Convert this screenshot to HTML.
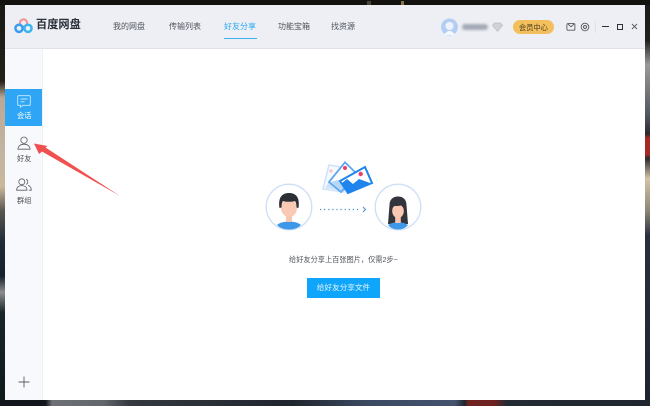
<!DOCTYPE html>
<html><head><meta charset="utf-8">
<style>
html,body{margin:0;padding:0}
body{width:650px;height:406px;position:relative;overflow:hidden;background:#0c0f14;font-family:"Liberation Sans","Noto Sans CJK SC",sans-serif}
.a{position:absolute}
.t{position:absolute;white-space:nowrap;line-height:12px;filter:blur(.25px)}
</style></head>
<body>
<!-- wallpaper strips -->
<div class="a" style="left:0;top:0;width:5px;height:406px;background:linear-gradient(180deg,#1a1814 0,#222019 20%,#b9a994 24%,#c4b5a2 38%,#c9b79c 46%,#59564f 52%,#1e2a38 60%,#16202b 68%,#8a8d8c 72%,#18252a 77%,#0d1a1c 100%)"></div>
<div class="a" style="left:645px;top:0;width:5px;height:406px;background:linear-gradient(180deg,#1a1a1a 0,#20201f 10%,#9a9a98 16%,#55595e 28%,#2a2a30 33%,#a52a26 34%,#a52a26 38%,#2b2a30 39%,#d4c4a6 44%,#8b8578 52%,#2c2f3b 58%,#1c2430 100%)"></div>
<div class="a" style="left:0;top:0;width:650px;height:5px;background:#14120f"></div>
<div class="a" style="left:367px;top:1px;width:4px;height:4px;background:#4a4438"></div>
<div class="a" style="left:401px;top:1px;width:3px;height:4px;background:#84734a"></div>
<div class="a" style="left:0;top:400px;width:650px;height:6px;background:linear-gradient(90deg,#12161c 0,#12161c 7%,#6d7075 8%,#62666b 16%,#34383f 20%,#20252d 45%,#3a4860 56%,#44536e 70%,#1e2530 71.500%,#6e211e 72%,#6e211e 76%,#242a33 78%,#20262e 100%)"></div>

<!-- window -->
<div class="a" style="left:5px;top:5px;width:640px;height:395px;background:#fff"></div>
<div class="a" style="left:5px;top:5px;width:640px;height:43px;background:#edeff5;border-bottom:1px solid #dfe2e8"></div>
<div class="a" style="left:5px;top:49px;width:37px;height:351px;background:#f8f9fc;border-right:1px solid #eef0f4"></div>

<!-- logo -->
<svg class="a" style="left:14px;top:17px" width="19" height="17" viewBox="0 0 19 17">
<circle cx="9.500" cy="6" r="3.600" fill="none" stroke="#f0969a" stroke-width="2.200"/>
<circle cx="5" cy="11.300" r="3.600" fill="none" stroke="#3a9cf0" stroke-width="2.500"/>
<circle cx="14" cy="11.300" r="3.600" fill="none" stroke="#39b6ec" stroke-width="2.500"/>
</svg>
<div class="t" style="left:36px;top:19px;font-size:11.200px;font-weight:700;color:#2a2f3a;line-height:13px">百度网盘</div>

<!-- nav -->
<div class="t" style="left:113px;top:21px;font-size:8px;color:#50535b">我的网盘</div>
<div class="t" style="left:169px;top:21px;font-size:8px;color:#50535b">传输列表</div>
<div class="t" style="left:224px;top:21px;font-size:8px;color:#2eaaf0">好友分享</div>
<div class="a" style="left:224px;top:38px;width:33px;height:1.400px;background:#3db0f0"></div>
<div class="t" style="left:278px;top:21px;font-size:8px;color:#50535b">功能宝箱</div>
<div class="t" style="left:331px;top:21px;font-size:8px;color:#50535b">找资源</div>

<!-- user -->
<svg class="a" style="left:441px;top:18px" width="17" height="18" viewBox="0 0 17 18">
<circle cx="8.500" cy="9" r="8.500" fill="#b4cdf2"/>
<circle cx="8.500" cy="8" r="4" fill="#eef3fb"/>
<path d="M3.500 17c1-3 3-4 5-4s4 1 5 4z" fill="#f4f7fc"/>
</svg>
<div class="a" style="left:462px;top:23.500px;width:26px;height:6px;border-radius:3px;background:#a4aab5;filter:blur(1.300px)"></div>
<svg class="a" style="left:492px;top:22px" width="11" height="10" viewBox="0 0 11 10"><path d="M2.500 1h6l2 2.400L5.500 9.300.5 3.400z" fill="#cfd2d9" stroke="#b9bdc5" stroke-width=".8"/></svg>
<div class="a" style="left:513px;top:20px;width:41px;height:14px;border-radius:7px;background:#f2bf5c"></div>
<div class="t" style="left:519px;top:21.500px;font-size:7.200px;color:#4a3a1c;line-height:11px">会员中心</div>

<!-- top icons -->
<svg class="a" style="left:566px;top:22px" width="10" height="10" viewBox="0 0 10 10"><rect x=".9" y="1.600" width="8" height="6.600" rx="1" fill="none" stroke="#55585f" stroke-width=".9"/><path d="M2 2l3 2.800L8 2" fill="none" stroke="#55585f" stroke-width=".9"/></svg>
<svg class="a" style="left:580px;top:22px" width="10" height="10" viewBox="0 0 10 10"><circle cx="5" cy="5" r="3.800" fill="none" stroke="#55585f" stroke-width=".9"/><circle cx="5" cy="5" r="1.500" fill="none" stroke="#55585f" stroke-width=".9"/></svg>
<div class="a" style="left:595px;top:21px;width:1px;height:12px;background:#dfe1e7"></div>
<div class="a" style="left:602px;top:26px;width:7px;height:1.200px;background:#2d3038"></div>
<div class="a" style="left:617px;top:23.500px;width:4px;height:4px;border:1.300px solid #2d3038"></div>
<svg class="a" style="left:631px;top:22.500px" width="7" height="7" viewBox="0 0 7 7"><path d="M1 1l5 5M6 1L1 6" stroke="#55585f" stroke-width=".9"/></svg>

<!-- sidebar -->
<div class="a" style="left:5px;top:89px;width:37px;height:37px;background:#2ea6f5"></div>
<svg class="a" style="left:17px;top:95px" width="14" height="13" viewBox="0 0 14 13"><path d="M1.500.7h11a.8.8 0 0 1 .8.8v8a.8.8 0 0 1-.8.8H6L3.500 12.200v-1.900h-2a.8.8 0 0 1-.8-.8v-8a.8.8 0 0 1 .8-.8z" fill="none" stroke="#cfe9fd" stroke-width=".9"/><path d="M3.500 4h7M3.500 6.800h4" stroke="#cfe9fd" stroke-width=".9"/></svg>
<div class="t" style="left:17px;top:111px;font-size:7.200px;color:#fff;line-height:10px">会话</div>

<svg class="a" style="left:17px;top:136px" width="14" height="14" viewBox="0 0 14 14"><circle cx="7" cy="4.200" r="3.200" fill="none" stroke="#5a5d65" stroke-width=".8"/><path d="M1 13.200c0-3 2.400-5 6-5s6 2 6 5z" fill="none" stroke="#5a5d65" stroke-width=".8"/></svg>
<div class="t" style="left:17px;top:154px;font-size:7.200px;color:#4a4d55;line-height:10px">好友</div>

<svg class="a" style="left:16px;top:178px" width="16" height="13" viewBox="0 0 16 13"><circle cx="5.800" cy="3.800" r="3" fill="none" stroke="#5a5d65" stroke-width=".8"/><path d="M.6 12.200c0-2.800 2-4.600 5.200-4.600S11 9.400 11 12.200z" fill="none" stroke="#5a5d65" stroke-width=".8"/><path d="M10 1.200a2.800 2.800 0 0 1 0 5.200M12 7.400c2 .6 3.300 2.400 3.300 4.800H13" fill="none" stroke="#5a5d65" stroke-width=".8"/></svg>
<div class="t" style="left:17px;top:196px;font-size:7.200px;color:#4a4d55;line-height:10px">群组</div>

<svg class="a" style="left:18px;top:376px" width="12" height="12" viewBox="0 0 12 12"><path d="M6 .5v11M.5 6h11" stroke="#5a5d65" stroke-width=".9"/></svg>

<!-- red arrow -->
<svg class="a" style="left:30px;top:138px" width="95" height="62" viewBox="0 0 95 62"><path d="M4 5.500L17.500 8 15.500 9.500 90 58 12 13.500 9 16z" fill="#f0504f"/></svg>

<!-- illustration -->
<svg class="a" style="left:255px;top:150px" width="180" height="90" viewBox="0 0 180 90">
<!-- left avatar -->
<circle cx="34" cy="57" r="22.800" fill="#fff" stroke="#cfe0f6" stroke-width="1.300"/>
<path d="M22 75c3-2.500 7-3.500 12-3.500s9 1 12 3.500c-3 3-7 4.500-12 4.500s-9-1.500-12-4.500z" fill="#3f97ea"/>
<rect x="31" y="62" width="6" height="10" fill="#f8c6ae"/>
<ellipse cx="34" cy="58" rx="8" ry="9" fill="#f9c9b3"/>
<path d="M24.500 58c-1.500-10 2-15 9.500-15s11 5 9.500 15l-2-.5c0-3-.3-5-1.500-6.500-3.500 1-8.500 1-12 0-1.200 1.500-1.500 3.500-1.500 6.500z" fill="#2c2f36"/>
<!-- right avatar -->
<circle cx="143" cy="57" r="22.800" fill="#fff" stroke="#cfe0f6" stroke-width="1.300"/>
<path d="M134.500 55c0-5 3-8.500 8.500-8.500s8.500 3.500 8.500 8.500l1.500 19h-20z" fill="#33353c"/>
<path d="M133 75c3-2 6-2.800 10-2.800s7 .8 10 2.800c-2.500 3-6 4.500-10 4.500s-7.500-1.500-10-4.500z" fill="#3f97ea"/>
<rect x="140.200" y="64" width="5.600" height="9" fill="#f8c6ae"/>
<ellipse cx="143" cy="61" rx="5.800" ry="7" fill="#f9c9b3"/>
<path d="M137 59c0-5 2-7.500 6-7.500s6 2.500 6 7.500c-1-1.500-2-3-3-3.500-2 .5-5 .5-6.500.5-1 .5-1.800 1.500-2.500 3z" fill="#33353c"/>
<!-- dots -->
<path d="M65 59.500H106" stroke="#4b8bd0" stroke-width="1.200" stroke-dasharray="1.200 2.900" fill="none"/>
<path d="M108 57l2.500 2.500-2.500 2.500" stroke="#4b8bd0" stroke-width="1" fill="none"/>
<!-- photos -->
<path d="M74 15L91 18 89 42 68 39z" fill="#f6f9fe" stroke="#cfe2fa" stroke-width="1.500"/>
<circle cx="76" cy="21" r="1.700" fill="#f7c7cf"/>
<path d="M70 38l5-8 6 4 7 3v4z" fill="#cfe3fb"/>
<path d="M90 12.300L74 32 86 42 102 24z" fill="#fff" stroke="#5ea7ee" stroke-width="1.800"/>
<circle cx="90" cy="18" r="2" fill="#ee3d6b"/>
<path d="M76 32l7-2 5 2 3 2-5 7z" fill="#b6d7f7"/>
<path d="M85 31L110 17 117 33 93 43z" fill="#fff" stroke="#1f84ec" stroke-width="2"/>
<circle cx="105.700" cy="24" r="2.200" fill="#ee3d6b"/>
<path d="M87 33l5-4 6 5 6-5 11 4-22 10z" fill="#1f84ec"/>
</svg>

<!-- text -->
<div class="t" style="left:289px;top:254px;font-size:7.200px;color:#4d5058;line-height:11px">给好友分享上百张图片，仅需2步~</div>
<div class="a" style="left:307px;top:278px;width:73px;height:20px;background:#0ea5fb"></div>
<div class="t" style="left:307px;top:278px;width:73px;text-align:center;font-size:7.600px;color:#e8f6ff;line-height:20px">给好友分享文件</div>
</body></html>
